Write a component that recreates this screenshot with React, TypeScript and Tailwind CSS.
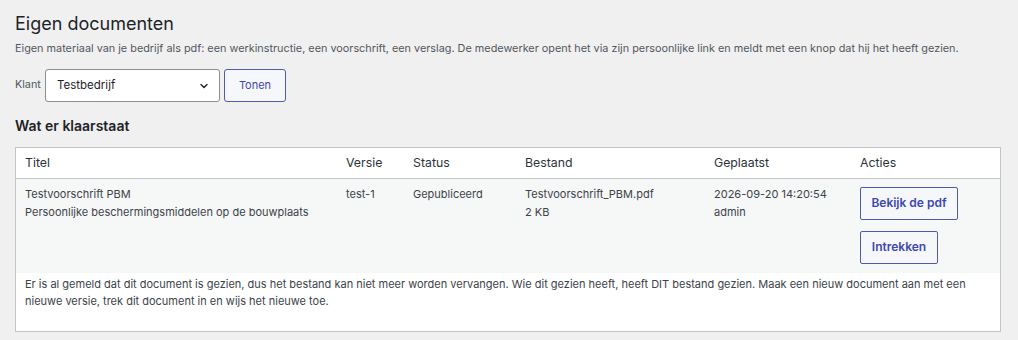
import React from "react";

export default function App() {
  return (
    <div
      className="min-h-[340px] w-[1018px] bg-[#f0f0f1] pl-[15px] pr-[17px] pt-[9px] text-[#3c434a]"
      style={{ fontFamily: "Inter, 'Noto Sans', sans-serif" }}
    >
      <h1 className="text-[18px] font-normal leading-[30px] text-[#1d2327]">Eigen documenten</h1>
      <p className="mt-[1px] text-[10.85px] leading-[16px] text-[#50575e]">
        Eigen materiaal van je bedrijf als pdf: een werkinstructie, een voorschrift, een verslag. De medewerker opent het via zijn persoonlijke link en meldt met een knop dat hij het heeft gezien.
      </p>
      <div className="mt-[13px] flex items-center gap-[4px]">
        <span className="mr-[1px] w-[25px] text-[10.8px] text-[#50575e]">Klant</span>
        <div className="flex h-[33px] w-[175px] items-center justify-between rounded-[3px] border border-[#8c8f94] bg-white pl-[11px] pr-[9px] text-[11.5px] text-[#1d2327]">
          <span>Testbedrijf</span>
          <svg width="12" height="12" viewBox="0 0 12 12" fill="none">
            <path d="M3 4.5 L6 7.5 L9 4.5" stroke="#1d2327" strokeWidth="1.4" strokeLinecap="round" strokeLinejoin="round" />
          </svg>
        </div>
        <button className="h-[33px] w-[62px] rounded-[3px] border border-[#4f5ab0] bg-[#f6f7fb] text-[11px] font-normal text-[#3c48b0]">
          Tonen
        </button>
      </div>
      <h2 className="mt-[14px] text-[14px] font-semibold leading-[20px] text-[#1d2327]">Wat er klaarstaat</h2>
      <div className="mt-[11px] border border-[#c3c4c7] bg-white">
        <table className="w-full table-fixed border-collapse text-[11px]">
          <colgroup>
            <col className="w-[321px]" />
            <col className="w-[67px]" />
            <col className="w-[112px]" />
            <col className="w-[189px]" />
            <col className="w-[146px]" />
            <col />
          </colgroup>
          <thead>
            <tr className="h-[30px] border-b border-[#c3c4c7] text-left text-[12.3px] text-[#2c3338]">
              <th className="px-[9px] font-normal">Titel</th>
              <th className="px-[9px] font-normal">Versie</th>
              <th className="px-[9px] font-normal">Status</th>
              <th className="px-[9px] font-normal">Bestand</th>
              <th className="px-[9px] font-normal">Geplaatst</th>
              <th className="px-[9px] font-normal">Acties</th>
            </tr>
          </thead>
          <tbody>
            <tr className="bg-[#f6f7f7] align-top leading-[18px]">
              <td className="px-[9px] pt-[6px]">
                <div>Testvoorschrift PBM</div>
                <div>Persoonlijke beschermingsmiddelen op de bouwplaats</div>
              </td>
              <td className="px-[9px] pt-[6px]">test-1</td>
              <td className="px-[9px] pt-[6px]">Gepubliceerd</td>
              <td className="px-[9px] pt-[6px]">
                <div>Testvoorschrift_PBM.pdf</div>
                <div>2 KB</div>
              </td>
              <td className="px-[9px] pt-[6px]">
                <div>2026-09-20 14:20:54</div>
                <div>admin</div>
              </td>
              <td className="px-[9px] pb-[9px] pt-[8px]">
                <div className="flex flex-col items-start gap-[11px]">
                  <button className="h-[33px] w-[98px] rounded-[2px] border border-[#4f5ab0] bg-[#f6f7fb] text-[12px] font-semibold text-[#3c48b0]">
                    Bekijk de pdf
                  </button>
                  <button className="h-[33px] w-[78px] rounded-[2px] border border-[#4f5ab0] bg-[#f6f7fb] text-[12px] font-semibold text-[#3c48b0]">
                    Intrekken
                  </button>
                </div>
              </td>
            </tr>
            <tr>
              <td colSpan={6} className="px-[9px] pb-[21px] pt-[3px] text-[11px] leading-[17px] text-[#3c434a]">
                Er is al gemeld dat dit document is gezien, dus het bestand kan niet meer worden vervangen. Wie dit gezien heeft, heeft DIT bestand gezien. Maak een nieuw document aan met een nieuwe versie, trek dit document in en wijs het nieuwe toe.
              </td>
            </tr>
          </tbody>
        </table>
      </div>
    </div>
  );
}
